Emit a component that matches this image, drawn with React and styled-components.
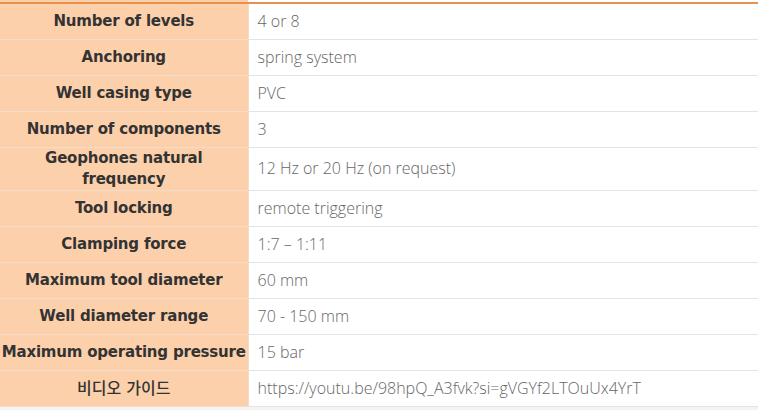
import React from 'react'
import styled, { createGlobalStyle } from 'styled-components'

const GlobalStyle = createGlobalStyle`
  html, body {
    margin: 0;
    padding: 0;
    background: #f4f4f4;
  }
`

const Page = styled.div`
  width: 758px;
  height: 410px;
  overflow: hidden;
  background: #f4f4f4;
`

const SpecTable = styled.table`
  width: 100%;
  border-collapse: collapse;
  table-layout: fixed;
  background: #fff;
`

const LabelCol = styled.col`
  width: 248px;
`

const Row = styled.tr`
  height: ${props => props.tall ? '43px' : '36px'};
`

const Label = styled.th`
  padding: 0 1px;
  background: #fdd0ac;
  border-right: 1px solid #f3ddca;
  border-bottom: 1px solid #f3ddca;
  color: #333;
  font-family: "DejaVu Sans", "Noto Sans CJK KR", sans-serif;
  font-size: ${props => props.korean ? '16px' : '15px'};
  font-weight: ${props => props.korean ? 500 : 700};
  letter-spacing: ${props => props.korean ? '0' : '-0.2px'};
  line-height: 21px;
  text-align: center;
  vertical-align: middle;
  white-space: ${props => props.tall ? 'normal' : 'nowrap'};
  overflow: hidden;
`

const Value = styled.td`
  padding: 0 9px;
  border-bottom: 1px solid #e4e4e4;
  color: #666;
  font-family: "Open Sans", "Noto Sans", sans-serif;
  font-size: 16px;
  font-weight: 300;
  line-height: 21px;
  vertical-align: middle;
  white-space: nowrap;
`

const ClipRow = styled.tr`
  height: 2px;

  th, td {
    height: 2px;
    padding: 0;
    border-bottom: 2px solid #e8914e;
  }
`

const ClipLabel = styled.th`
  background: #fdd0ac;
`

const ClipValue = styled.td`
  background: #fff;
`

const specs = [
  ['Number of levels', '4 or 8'],
  ['Anchoring', 'spring system'],
  ['Well casing type', 'PVC'],
  ['Number of components', '3'],
  ['Geophones natural frequency', '12 Hz or 20 Hz (on request)', true],
  ['Tool locking', 'remote triggering'],
  ['Clamping force', '1:7 – 1:11'],
  ['Maximum tool diameter', '60 mm'],
  ['Well diameter range', '70 - 150 mm'],
  ['Maximum operating pressure', '15 bar'],
  ['비디오 가이드', 'https://youtu.be/98hpQ_A3fvk?si=gVGYf2LTOuUx4YrT', false, true]
]

const App = () => {
  return (
    <Page>
      <GlobalStyle />
      <SpecTable>
        <colgroup>
          <LabelCol />
          <col />
        </colgroup>
        <tbody>
          <ClipRow>
            <ClipLabel />
            <ClipValue />
          </ClipRow>
          {specs.map(([label, value, tall, korean]) => (
            <Row key={label} tall={tall}>
              <Label korean={korean} tall={tall}>{label}</Label>
              <Value>{value}</Value>
            </Row>
          ))}
        </tbody>
      </SpecTable>
    </Page>
  )
}

export default App
